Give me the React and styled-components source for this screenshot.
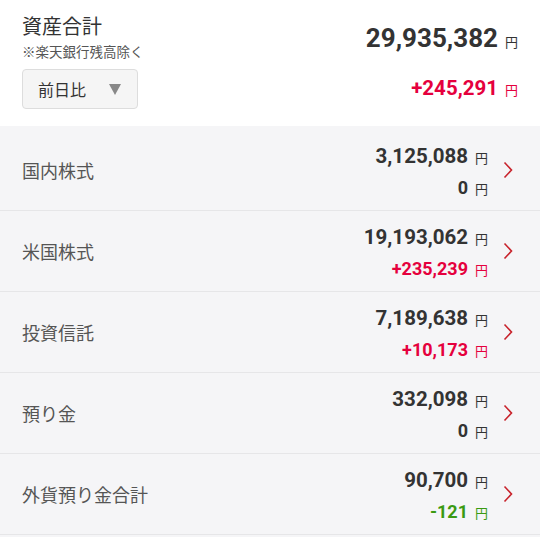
import React from "react";
import styled, { createGlobalStyle } from "styled-components";

const Global = createGlobalStyle`
  html, body { margin: 0; padding: 0; background: #f5f5f7; }
  body { font-family: Roboto, "Noto Sans CJK JP", sans-serif; color: #333; }
`;

const Page = styled.div`
  width: 540px;
  height: 537px;
  overflow: hidden;
  background: #f5f5f7;
`;

const Header = styled.div`
  background: #fff;
  height: 126px;
  box-sizing: border-box;
  padding: 12px 22px 0 22px;
  display: flex;
  justify-content: space-between;
`;

const LeftCol = styled.div`
  display: flex;
  flex-direction: column;
`;

const Title = styled.div`
  font-family: "Noto Sans CJK JP", sans-serif;
  font-size: 20px;
  line-height: 28px;
  color: #333;
`;

const Note = styled.div`
  font-family: "Noto Sans CJK JP", sans-serif;
  font-size: 13.5px;
  line-height: 18px;
  color: #555;
  margin-top: 2px;
`;

const Select = styled.div`
  margin-top: 9px;
  width: 116px;
  height: 40px;
  box-sizing: border-box;
  border: 1px solid #ddd;
  border-radius: 4px;
  background: #f5f5f5;
  display: flex;
  align-items: center;
  justify-content: space-between;
  padding: 0 16px 0 15px;
  font-family: "Noto Sans CJK JP", sans-serif;
  font-size: 16px;
  color: #333;
`;

const Tri = styled.span`
  width: 0;
  height: 0;
  border-left: 6px solid transparent;
  border-right: 6px solid transparent;
  border-top: 11px solid #888;
`;

const RightCol = styled.div`
  display: flex;
  flex-direction: column;
  align-items: flex-end;
  padding-top: 10px;
`;

const Amount = styled.div`
  display: flex;
  align-items: baseline;
  justify-content: flex-end;
  font-family: Roboto, sans-serif;
  font-weight: 700;
  font-size: ${(p) => p.$size}px;
  line-height: ${(p) => p.$lh}px;
  color: ${(p) => p.$color || "#333"};
  margin-top: ${(p) => p.$mt || 0}px;
`;

const Yen = styled.span`
  font-family: "Noto Sans CJK JP", sans-serif;
  font-weight: 400;
  font-size: 13px;
  margin-left: 7px;
  color: ${(p) => p.$color || "#333"};
`;

const List = styled.div`
  padding-top: 4px;
`;

const Row = styled.div`
  height: 80px;
  border-bottom: 1px solid #e6e6e8;
  display: flex;
  align-items: center;
  padding: 0 27px 0 22px;
`;

const Label = styled.div`
  flex: 1;
  font-family: "Noto Sans CJK JP", sans-serif;
  font-size: 18px;
  color: #555;
`;

const Values = styled.div`
  display: flex;
  flex-direction: column;
  align-items: flex-end;
  margin-right: 15px;
  padding-top: 4px;
`;

const Chevron = () => (
  <svg width="10" height="18" viewBox="0 0 10 18">
    <path d="M1.5 1.5 L8.5 9 L1.5 16.5" fill="none" stroke="#c8232c" strokeWidth="1.6" />
  </svg>
);

const colorOf = (v) =>
  v.startsWith("+") ? "#e5003d" : v.startsWith("-") ? "#3a9a12" : "#333";

const rows = [
  ["国内株式", "3,125,088", "0"],
  ["米国株式", "19,193,062", "+235,239"],
  ["投資信託", "7,189,638", "+10,173"],
  ["預り金", "332,098", "0"],
  ["外貨預り金合計", "90,700", "-121"],
];

export default function App() {
  return (
    <Page>
      <Global />
      <Header>
        <LeftCol>
          <Title>資産合計</Title>
          <Note>※楽天銀行残高除く</Note>
          <Select>
            <span>前日比</span>
            <Tri />
          </Select>
        </LeftCol>
        <RightCol>
          <Amount $size={26} $lh={32}>
            29,935,382<Yen>円</Yen>
          </Amount>
          <Amount $size={20.5} $lh={24} $mt={18} $color="#e5003d">
            +245,291<Yen $color="#e5003d">円</Yen>
          </Amount>
        </RightCol>
      </Header>
      <List>
        {rows.map(([label, a, d]) => (
          <Row key={label}>
            <Label>{label}</Label>
            <Values>
              <Amount $size={20.5} $lh={28}>
                {a}
                <Yen>円</Yen>
              </Amount>
              <Amount $size={18} $lh={28} $mt={2} $color={colorOf(d)}>
                {d}
                <Yen $color={colorOf(d)}>円</Yen>
              </Amount>
            </Values>
            <Chevron />
          </Row>
        ))}
      </List>
    </Page>
  );
}
